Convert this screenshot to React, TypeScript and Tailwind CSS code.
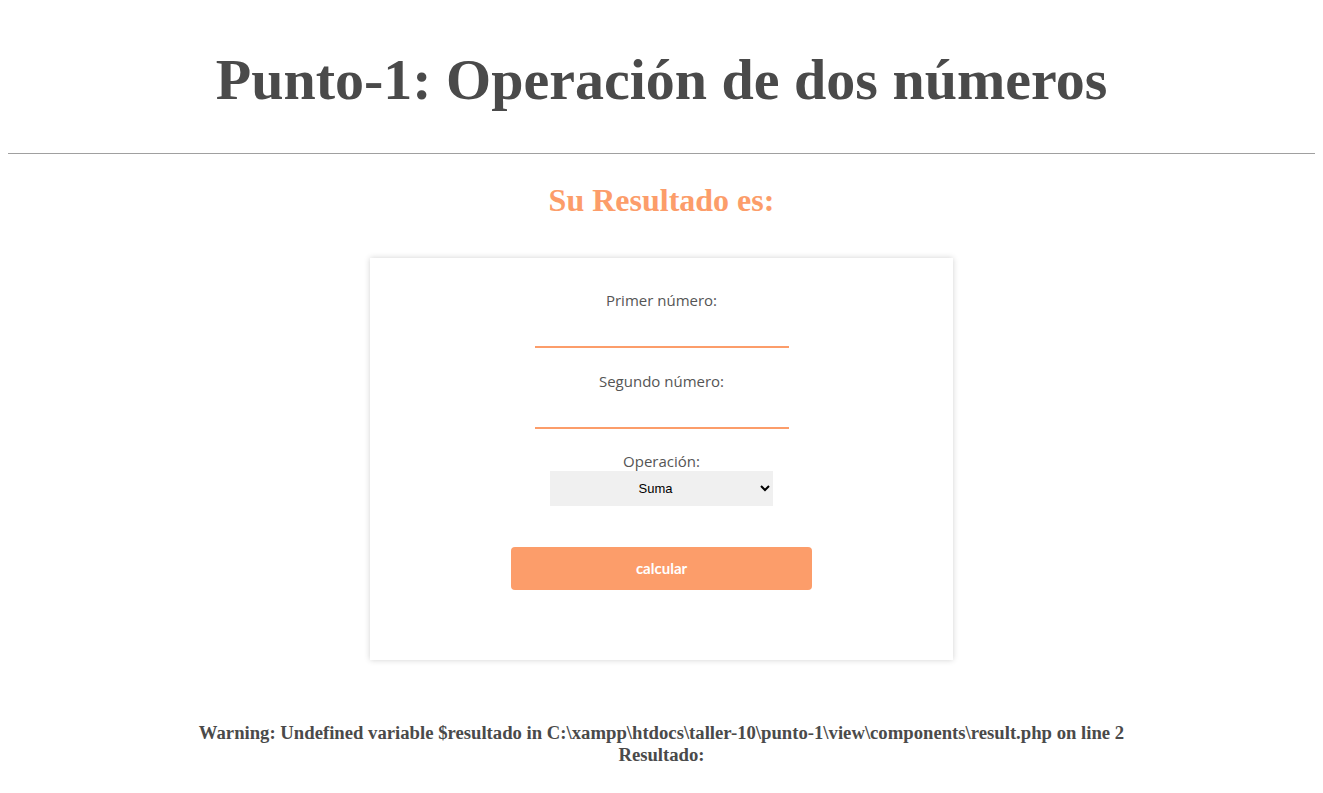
export default function App() {
  return (
    <div className="min-h-screen bg-white px-2 text-[#4a4a4a]">
      <h1 className="pt-[48px] pb-[41px] text-center font-['Liberation_Serif',serif] text-[58px] font-bold leading-[64px]">
        Punto-1: Operación de dos números
      </h1>
      <hr className="border-t border-[#a0a0a0]" />
      <h2 className="mt-[28px] text-center font-['Liberation_Serif',serif] text-[32px] font-bold leading-9 text-[#fc9d6a]">
        Su Resultado es:
      </h2>

      <div className="mx-auto mt-[40px] flex w-[583px] flex-col items-center bg-white pt-[32px] pb-[70px] shadow-[0_0_6px_rgba(0,0,0,0.18)] font-['Open_Sans',sans-serif] text-[15px] text-[#555]">
        <label className="leading-5">Primer número:</label>
        <input className="mt-[17px] h-[21px] w-[254px] border-b-2 border-[#fc9d6a] outline-none" />
        <label className="mt-[23px] leading-5">Segundo número:</label>
        <input className="mt-[17px] h-[21px] w-[254px] border-b-2 border-[#fc9d6a] outline-none" />
        <label className="mt-[22px] leading-5">Operación:</label>
        <select className="h-[35px] w-[223px] bg-[#f0f0f0] text-center font-['Liberation_Sans',sans-serif] text-[13px] text-black">
          <option>Suma</option>
        </select>
        <button className="mt-[41px] h-[43px] w-[301px] rounded bg-[#fc9d6a] font-['Lato',sans-serif] text-[15px] font-bold text-white">
          calcular
        </button>
      </div>

      <div className="mt-[62px] text-center font-['Liberation_Serif',serif] text-[18.7px] font-bold leading-[22px]">
        <div>
          Warning: Undefined variable $resultado in C:\xampp\htdocs\taller-10\punto-1\view\components\result.php on line 2
        </div>
        <div>Resultado:</div>
      </div>
    </div>
  );
}
